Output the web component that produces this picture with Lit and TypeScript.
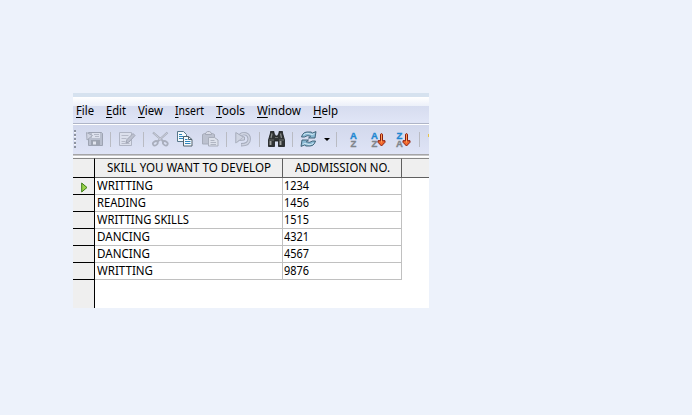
import { LitElement, html, svg, css } from "lit";
import { customElement, property } from "lit/decorators.js";

/** A single line of text condensed to a given advance width. */
@customElement("fit-text")
class FitText extends LitElement {
  @property({ type: Number }) w = 0;
  @property({ type: Number }) u = 0;
  @property() text = "";
  static styles = css`
    :host { display: block; height: 16px; white-space: nowrap; }
    .t { display: inline-block; transform-origin: 0 50%; line-height: 16px; }
    .m { text-decoration: underline; text-underline-offset: 2px; text-decoration-thickness: 1px; text-decoration-skip-ink: none; }
  `;
  render() {
    return html`<span class="t"><span class="m">${this.text.slice(0, this.u)}</span>${this.text.slice(this.u)}</span>`;
  }
  updated() {
    const t = this.renderRoot.querySelector(".t") as HTMLElement;
    this.style.width = this.w + "px";
    const natural = t.getBoundingClientRect().width;
    if (natural) t.style.transform = `scaleX(${this.w / natural})`;
  }
}

const icon = (w: number, h: number, body: unknown) =>
  html`<svg width=${w} height=${h} viewBox="0 0 ${w} ${h}">${body}</svg>`;

const save = icon(18, 16, svg`
  <path d="M2.500 1.500h13l1 1v12h-14z" fill="#b9bfce" stroke="#9da3b2"/>
  <path d="M6 2h8v5H6z" fill="#dde1ed"/><path d="M8 3.500h5M9 5.500h4" stroke="#b3b8c6"/>
  <path d="M5 9h9v5H5z" fill="#9da3b0"/><path d="M7 10.500h3v3H7z" fill="#e1e4ed"/>
  <path d="M.5 1.500L6.500 4.500 1 9z" fill="#d0d4e2" stroke="#a6acba"/>`);
const edit = icon(17, 16, svg`
  <path d="M.5 1.500h12v13H.5z" fill="#dce0ec" stroke="#b0b5c4"/>
  <path d="M2.500 4.500h7M2.500 7.500h5M2.500 10.500h4M2.500 12.500h8" stroke="#b6bac8"/>
  <path d="M7 12l1-3.500 6-6 2 2-6 6.500z" fill="#bdc1cf" stroke="#a1a6b5"/>`);
const cut = icon(17, 16, svg`
  <path d="M1 1.500L12 11M15.500 1.500L5 11" stroke="#a9aebc" stroke-width="2.200"/>
  <path d="M1.500 2l8 7M15 2L7 9" stroke="#d0d4e0" stroke-width=".8"/>
  <ellipse cx="3.300" cy="12.300" rx="2.600" ry="1.900" fill="none" stroke="#a9aebc" stroke-width="1.700" transform="rotate(-35 3.300 12.300)"/>
  <ellipse cx="13.300" cy="12.300" rx="2.600" ry="1.900" fill="none" stroke="#a9aebc" stroke-width="1.700" transform="rotate(35 13.300 12.300)"/>`);
const copy = icon(16, 16, svg`
  <path d="M.5.500h6l3 3v7h-9z" fill="#f6fafc" stroke="#57778a"/>
  <path d="M2 3.500h3M2 5.500h5M2 7.500h4" stroke="#2f86bd"/>
  <path d="M6.500 5.500h5l3.500 3v6.500H6.500z" fill="#f6fafc" stroke="#52636e"/>
  <path d="M11.500 5.500v3H15" fill="none" stroke="#52636e"/>
  <path d="M8 8.500h2.500M8 10.500h5.500M8 12.500h5.500" stroke="#2f86bd"/>`);
const paste = icon(17, 16, svg`
  <path d="M.5 3.500l2-1h8l2 1v9.500H.5z" fill="#bcc1cf" stroke="#a6abb9"/>
  <path d="M3.500 3.500V2l2-1.500h2L9.500 2v1.500z" fill="#d9dce7" stroke="#a4a9b7"/>
  <path d="M6.500 6.500h6l3.500 2.500v6H6.500z" fill="#dde1eb" stroke="#a9aebb"/>
  <path d="M8.500 9.500h4M8.500 11.500h5.500M8.500 13.500h5.500" stroke="#b0b5c2"/>`);
const undo = icon(17, 16, svg`
  <path d="M5 4.500C8 1.200 14.200 2.500 14.200 8c0 4-3.500 5.800-8.200 5.800" fill="none" stroke="#a4aaba" stroke-width="3.400"/>
  <path d="M5 4.500C8 1.200 14.200 2.500 14.200 8c0 4-3.500 5.800-7.700 5.800" fill="none" stroke="#cdd2e0" stroke-width="1.600"/>
  <path d="M.8 1.500v10.500L4 9.500l5.500-.500V6L6.500 5z" fill="#cfd4e2" stroke="#a6acbb"/>
  <path d="M1 12l8-6.500" stroke="#b4b9c7"/>`);
const find = icon(17, 16, svg`
  <path d="M2.500 2V.5h3.500V2l1.500 3h2L11 2V.5h3.500V2l2 7v6.500h-6V10h-4v5.500h-6V9z" fill="#303334" stroke="#17191a" stroke-width=".8"/>
  <path d="M2.500 10v4M12.500 10v4" stroke="#a0a29f" stroke-width="1.900"/>
  <path d="M4 2.500L3 7M12.500 2.500l1 4.500" stroke="#858887" stroke-width="1.300"/>
  <path d="M1 9h5M11 9h5M7 6.500h3" stroke="#696c6b"/>`);
const refresh = icon(17, 16, svg`
  <path d="M1.500 6L2.500 3.500Q4 1 7 1h4l1.500 1L16 .6 15 7H8.500l2.200-1.800Q7 3.800 4.500 6z" fill="#8bbad4" stroke="#36596e" stroke-width=".9" stroke-linejoin="round"/>
  <path d="M15.500 10L14.500 12.500q-1.500 2.500-4.500 2.500H6l-1.500-1L1 15.400 2 9h6.500l-2.200 1.800q3.700 1.400 6.200-.8z" fill="#8bbad4" stroke="#36596e" stroke-width=".9" stroke-linejoin="round"/>
  <path d="M3.500 4Q5 2.300 8 2.300l4 1.300 2.500-1M13.500 12Q12 13.700 9 13.700l-4-1.300-2.300 1" fill="none" stroke="#cfe6f1"/>`);

/* Sorting glyph: two stacked letters, optionally with a downward arrow */
const sort = (top: string, bottom: string, arrow: boolean) => icon(arrow ? 15 : 8, 17, svg`
  <g font-family="Liberation Sans, sans-serif" font-size="9.500" font-weight="700" text-anchor="middle" stroke-width=".35">
    <text x="3.400" y="7.500" fill="#1f87d1" stroke="#1f87d1">${top}</text>
    <text x="3.400" y="16" fill="#80858b" stroke="#80858b">${bottom}</text>
  </g>
  ${arrow ? svg`<path d="M9.500 3.300q1-1.400 2 0V9.700h2.500v1.600L10.500 15 7 11.300V9.700h2.500z" fill="#f2682c" stroke="#8d1d0c"/>
  <path d="M10.500 3.500v8" stroke="#ffb064" stroke-width=".8"/>` : ""}`);

const sep = html`<i class="sep"></i>`;

@customElement("app-root")
class AppRoot extends LitElement {
  static styles = css`
    :host { display: block; box-sizing: border-box; width: 692px; height: 415px; padding: 93px 0 0 73px; background: #edf2fb;
      font: 12px/16px "Noto Sans", "Open Sans", sans-serif; color: #000; overflow: hidden; }
    .win { width: 356px; height: 215px; background: #fff; overflow: hidden; display: flex; flex-direction: column; }
    .strip { flex: none; height: 4px; background: #d6e2ef; }
    .menu { flex: none; box-sizing: border-box; height: 27px; display: flex; gap: 12px; padding: 6px 0 0 3px;
      background: linear-gradient(#fff 0, #ecf0f9 9px, #d6dcef 9px, #e0e5f6 25px); border-bottom: 1px solid #afb5c7; }
    .bar { flex: none; box-sizing: border-box; height: 30px; display: flex; align-items: center; padding-bottom: 1px; border-top: 1px solid #fff;
      background: linear-gradient(#d2d8ec, #dfe4f6); }
    .bar svg { display: block; flex: none; overflow: visible; }
    .grip { width: 3px; height: 18px; margin-right: 10px; flex: none;
      background: repeating-linear-gradient(#8d93a0 0 2px, #f5f6fa 2px 3px, transparent 3px 4px); clip-path: inset(0 0 0 1px); }
    .sep { width: 1px; height: 15px; background: #b9bbc3; flex: none; }
    .gap { flex: none; }
    .g6 { width: 6px; } .g7 { width: 7px; } .g8 { width: 8px; } .g9 { width: 9px; } .g10 { width: 10px; } .g13 { width: 13px; }
    .drop { flex: none; border: 3px solid transparent; border-top-color: #000; border-bottom: 0; width: 0; }
    .edge { flex: none; width: 2px; height: 3px; background: #e6c34b; margin-bottom: 7px; }
    .line { flex: none; height: 4px; background: linear-gradient(#a5a5a7 0 1px, #c9c9cb 1px 2px, #fff 2px 3px, #f6f6f6 3px 4px); }
    .grid { flex: 1; display: grid; grid-template-columns: 22px 188px 119px 27px; grid-template-rows: 20px repeat(6, 17px) 1fr; }
    .grid > div { box-sizing: border-box; overflow: hidden; }
    .h { background: #efefef; border-top: 1px solid #888; border-bottom: 1px solid #5f5f5f; border-right: 1px solid #5f5f5f; padding-top: 1px; display: flex; justify-content: center; }
    .h.first { border-right-color: #000; border-bottom-color: #000; }
    .h.last { border-right: 0; }
    .mark { background: #efefef; border-right: 1px solid #000; border-bottom: 1px solid #000; display: flex; align-items: center; padding: 3px 0 0 8px; }
    .mark.end { border-bottom: 0; }
    .cell { border-right: 1px solid #c0c0c0; border-bottom: 1px solid #c0c0c0; padding-left: 2px; }
    .num { padding-left: 1px; }
    .tail { background: #fff; }
  `;
  menus: [string, number][] = [["File", 18], ["Edit", 20], ["View", 25], ["Insert", 29], ["Tools", 29], ["Window", 44], ["Help", 25]];
  rows: [string, number, string][] = [
    ["WRITTING", 56, "1234"], ["READING", 49, "1456"], ["WRITTING SKILLS", 92, "1515"],
    ["DANCING", 53, "4321"], ["DANCING", 53, "4567"], ["WRITTING", 56, "9876"],
  ];
  gap(n: number) { return html`<i class="gap g${n}"></i>`; }
  render() {
    const g = this.gap;
    return html`<div class="win">
      <div class="strip"></div>
      <div class="menu">${this.menus.map(([t, w]) => html`<fit-text .text=${t} .w=${w} .u=${1}></fit-text>`)}</div>
      <div class="bar">
        <i class="grip"></i>${save}${g(6)}${sep}${g(8)}${edit}${g(7)}${sep}${g(8)}${cut}${g(8)}${copy}${g(9)}${paste}${g(7)}${sep}${g(8)}${undo}${g(7)}${sep}${g(8)}${find}${g(7)}${sep}${g(7)}${refresh}${g(7)}<i class="drop"></i>${g(6)}${sep}${g(13)}${sort("A", "Z", false)}${g(13)}${sort("A", "Z", true)}${g(10)}${sort("Z", "A", true)}${g(8)}${sep}${g(8)}<i class="edge"></i>
      </div>
      <div class="line"></div>
      <div class="grid">
        <div class="h first"></div>
        <div class="h"><fit-text .text=${"SKILL YOU WANT TO DEVELOP"} .w=${164}></fit-text></div>
        <div class="h"><fit-text .text=${"ADDMISSION NO."} .w=${95}></fit-text></div>
        <div class="h last"></div>
        ${this.rows.map(([s, w, n], i) => html`
          <div class="mark">${i === 0 ? icon(7, 11, svg`<path d="M.7 1L6 5.500.7 10z" fill="#9bd34a" stroke="#3c7d16"/>`) : ""}</div>
          <div class="cell"><fit-text .text=${s} .w=${w}></fit-text></div>
          <div class="cell num"><fit-text .text=${n} .w=${25}></fit-text></div>
          <div class="tail"></div>`)}
        <div class="mark end"></div>
      </div>
    </div>`;
  }
}
